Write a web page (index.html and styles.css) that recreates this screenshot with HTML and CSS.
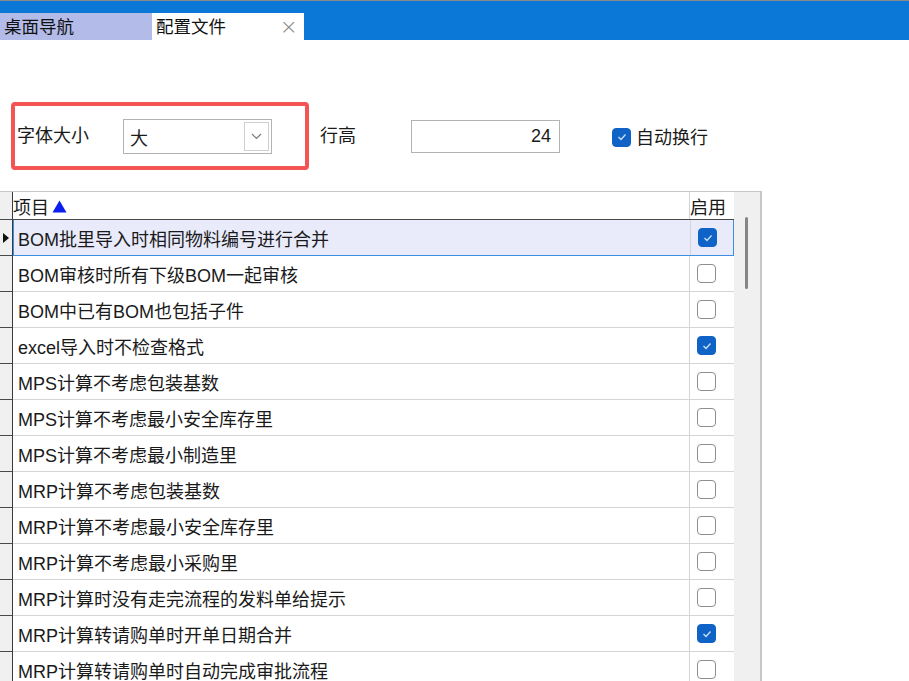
FILE: index.html
```html
<!DOCTYPE html>
<html lang="zh-CN">
<head>
<meta charset="utf-8">
<title>配置文件</title>
<link rel="stylesheet" href="styles.css">
</head>
<body>
<div class="tabbar">
  <div class="tab tab-nav">桌面导航</div>
  <div class="tab tab-active">配置文件<span class="close">×</span></div>
</div>

<div class="toolbar">
  <div class="redbox">
    <span class="lbl lbl-font">字体大小</span>
    <div class="select"><span class="sel-text">大</span>
      <span class="sel-btn"><svg width="11" height="7" viewBox="0 0 11 7"><path d="M1 1 L5.5 5.5 L10 1" fill="none" stroke="#7a7a7a" stroke-width="1.2"/></svg></span>
    </div>
  </div>
  <span class="lbl lbl-height">行高</span>
  <div class="input">24</div>
  <span class="cb cb-on top-cb"><svg width="12" height="10" viewBox="0 0 12 10"><path d="M2.5 5 L5 7.5 L9.5 2.5" fill="none" stroke="#cfe0f5" stroke-width="1.3"/></svg></span>
  <span class="lbl lbl-wrap">自动换行</span>
</div>

<div class="grid">
  <div class="table">
    <div class="row head">
      <div class="rh"></div>
      <div class="cells">
        <div class="c-name">项目<svg class="sort" width="15" height="13" viewBox="0 0 15 13"><path d="M7.5 0.5 L14.5 12.5 L0.5 12.5 Z" fill="#0a1ef0"/></svg></div>
        <div class="c-chk c-chk-head">启用</div>
      </div>
    </div>
    <div class="row sel">
      <div class="rh"><span class="ptr"></span></div>
      <div class="cells"><div class="c-name">BOM批里导入时相同物料编号进行合并</div><div class="c-chk"><span class="cb cb-on"><svg width="12" height="10" viewBox="0 0 12 10"><path d="M2.5 5 L5 7.5 L9.5 2.5" fill="none" stroke="#cfe0f5" stroke-width="1.3"/></svg></span></div></div>
    </div>
    <div class="row">
      <div class="rh"></div>
      <div class="cells"><div class="c-name">BOM审核时所有下级BOM一起审核</div><div class="c-chk"><span class="cb"></span></div></div>
    </div>
    <div class="row">
      <div class="rh"></div>
      <div class="cells"><div class="c-name">BOM中已有BOM也包括子件</div><div class="c-chk"><span class="cb"></span></div></div>
    </div>
    <div class="row">
      <div class="rh"></div>
      <div class="cells"><div class="c-name">excel导入时不检查格式</div><div class="c-chk"><span class="cb cb-on"><svg width="12" height="10" viewBox="0 0 12 10"><path d="M2.5 5 L5 7.5 L9.5 2.5" fill="none" stroke="#cfe0f5" stroke-width="1.3"/></svg></span></div></div>
    </div>
    <div class="row">
      <div class="rh"></div>
      <div class="cells"><div class="c-name">MPS计算不考虑包装基数</div><div class="c-chk"><span class="cb"></span></div></div>
    </div>
    <div class="row">
      <div class="rh"></div>
      <div class="cells"><div class="c-name">MPS计算不考虑最小安全库存里</div><div class="c-chk"><span class="cb"></span></div></div>
    </div>
    <div class="row">
      <div class="rh"></div>
      <div class="cells"><div class="c-name">MPS计算不考虑最小制造里</div><div class="c-chk"><span class="cb"></span></div></div>
    </div>
    <div class="row">
      <div class="rh"></div>
      <div class="cells"><div class="c-name">MRP计算不考虑包装基数</div><div class="c-chk"><span class="cb"></span></div></div>
    </div>
    <div class="row">
      <div class="rh"></div>
      <div class="cells"><div class="c-name">MRP计算不考虑最小安全库存里</div><div class="c-chk"><span class="cb"></span></div></div>
    </div>
    <div class="row">
      <div class="rh"></div>
      <div class="cells"><div class="c-name">MRP计算不考虑最小采购里</div><div class="c-chk"><span class="cb"></span></div></div>
    </div>
    <div class="row">
      <div class="rh"></div>
      <div class="cells"><div class="c-name">MRP计算时没有走完流程的发料单给提示</div><div class="c-chk"><span class="cb"></span></div></div>
    </div>
    <div class="row">
      <div class="rh"></div>
      <div class="cells"><div class="c-name">MRP计算转请购单时开单日期合并</div><div class="c-chk"><span class="cb cb-on"><svg width="12" height="10" viewBox="0 0 12 10"><path d="M2.5 5 L5 7.5 L9.5 2.5" fill="none" stroke="#cfe0f5" stroke-width="1.3"/></svg></span></div></div>
    </div>
    <div class="row">
      <div class="rh"></div>
      <div class="cells"><div class="c-name">MRP计算转请购单时自动完成审批流程</div><div class="c-chk"><span class="cb"></span></div></div>
    </div>
  </div>
  <div class="scroll"><div class="thumb"></div></div>
</div>
</body>
</html>
```

FILE: styles.css
```css
html, body {
  margin: 0;
  padding: 0;
  background: #ffffff;
  overflow: hidden;
}
body {
  font-family: "Liberation Sans", "Noto Sans CJK SC", sans-serif;
  font-size: 18px;
  color: #1a1a1a;
  width: 909px;
  height: 681px;
}

/* tab bar */
.tabbar {
  height: 40px;
  box-sizing: border-box;
  border-top: 1px solid #8a8a8a;
  background: #0b78d8;
  display: flex;
  align-items: flex-end;
}
.tab {
  width: 152px;
  height: 27px;
  box-sizing: border-box;
  padding-left: 4px;
  font-size: 17.5px;
  line-height: 28px;
  color: #111;
  display: flex;
  align-items: center;
}
.tab-nav { background: #b3bbe9; }
.tab-active { background: #ffffff; }
.close {
  margin-left: auto;
  margin-right: 6px;
  font-size: 22px;
  color: #8a8a8a;
  font-family: "DejaVu Sans", sans-serif;
  font-weight: 300;
  line-height: 22px;
}

/* toolbar */
.toolbar {
  margin-top: 62px;
  padding-left: 11px;
  display: flex;
  align-items: center;
}
.redbox {
  width: 298px;
  height: 68px;
  box-sizing: border-box;
  border: 4px solid #f35454;
  border-radius: 4px;
  display: flex;
  align-items: center;
  padding-left: 2px;
}
.lbl { line-height: 22px; }
.lbl-font { width: 106px; }
.select {
  width: 149px;
  height: 35px;
  box-sizing: border-box;
  border: 1px solid #b3b3b3;
  display: flex;
  align-items: center;
  padding: 0 2px 0 6px;
  margin-top: 1px;
}
.sel-text { flex: 1; }
.sel-btn {
  width: 25px;
  height: 29px;
  box-sizing: border-box;
  border: 1px solid #cfcfcf;
  display: flex;
  align-items: center;
  justify-content: center;
}
.lbl-height {
  margin-left: 11px;
  width: 91px;
}
.input {
  width: 149px;
  height: 33px;
  box-sizing: border-box;
  border: 1px solid #b3b3b3;
  text-align: right;
  padding-right: 8px;
  line-height: 31px;
}
.top-cb { margin-left: 52px; margin-top: 2px; }
.lbl-wrap { margin-left: 5px; margin-top: 4px; }

/* checkbox */
.cb {
  width: 19px;
  height: 19px;
  box-sizing: border-box;
  border: 1.5px solid #8e8e8e;
  border-radius: 4px;
  background: #fff;
  display: inline-flex;
  align-items: center;
  justify-content: center;
}
.cb-on {
  background: #0f63c6;
  border-color: #0f63c6;
}

/* grid */
.grid {
  margin-top: 21px;
  width: 762px;
  box-sizing: border-box;
  border-top: 1px solid #c7c7c7;
  border-right: 2px solid #c7c7c7;
  display: flex;
}
.table { width: 734px; }
.row {
  display: flex;
  height: 36px;
}
.row.head { height: 28px; }
.rh {
  width: 13px;
  box-sizing: border-box;
  background: #f0f0f0;
  border-right: 1px solid #3a3a3a;
  border-bottom: 1px solid #4a4a4a;
  display: flex;
  align-items: center;
}
.cells {
  flex: 1;
  display: flex;
  box-sizing: border-box;
  border-bottom: 1px solid #d5d5d5;
}
.head .cells { border-bottom: 1px solid #4a4a4a; }
.c-name {
  width: 676px;
  box-sizing: border-box;
  padding-left: 5px;
  display: flex;
  align-items: center;
  white-space: nowrap;
}
.head .c-name { padding-left: 0; }
.sort {
  margin-left: 3px;
  margin-top: 1px;
}
.c-chk {
  flex: 1;
  box-sizing: border-box;
  border-left: 1px solid #d5d5d5;
  padding-left: 7px;
  display: flex;
  align-items: center;
}
.c-chk-head {
  padding-left: 0;
  border-left: 1px solid #d5d5d5;
}
.sel .cells {
  background: #e9ebfa;
  border: 1px solid #3d8fe3;
  border-top: none;
}
.sel .c-name { padding-left: 4px; }
.ptr {
  width: 0;
  height: 0;
  margin-left: 3px;
  border-top: 5px solid transparent;
  border-bottom: 5px solid transparent;
  border-left: 6px solid #111;
}

/* scrollbar */
.scroll {
  flex: 1;
  background: #f0f0f0;
  padding: 25px 0 0 11px;
  box-sizing: border-box;
  height: 500px;
}
.thumb {
  width: 3px;
  height: 72px;
  background: #858585;
  border-radius: 2px;
}
```
